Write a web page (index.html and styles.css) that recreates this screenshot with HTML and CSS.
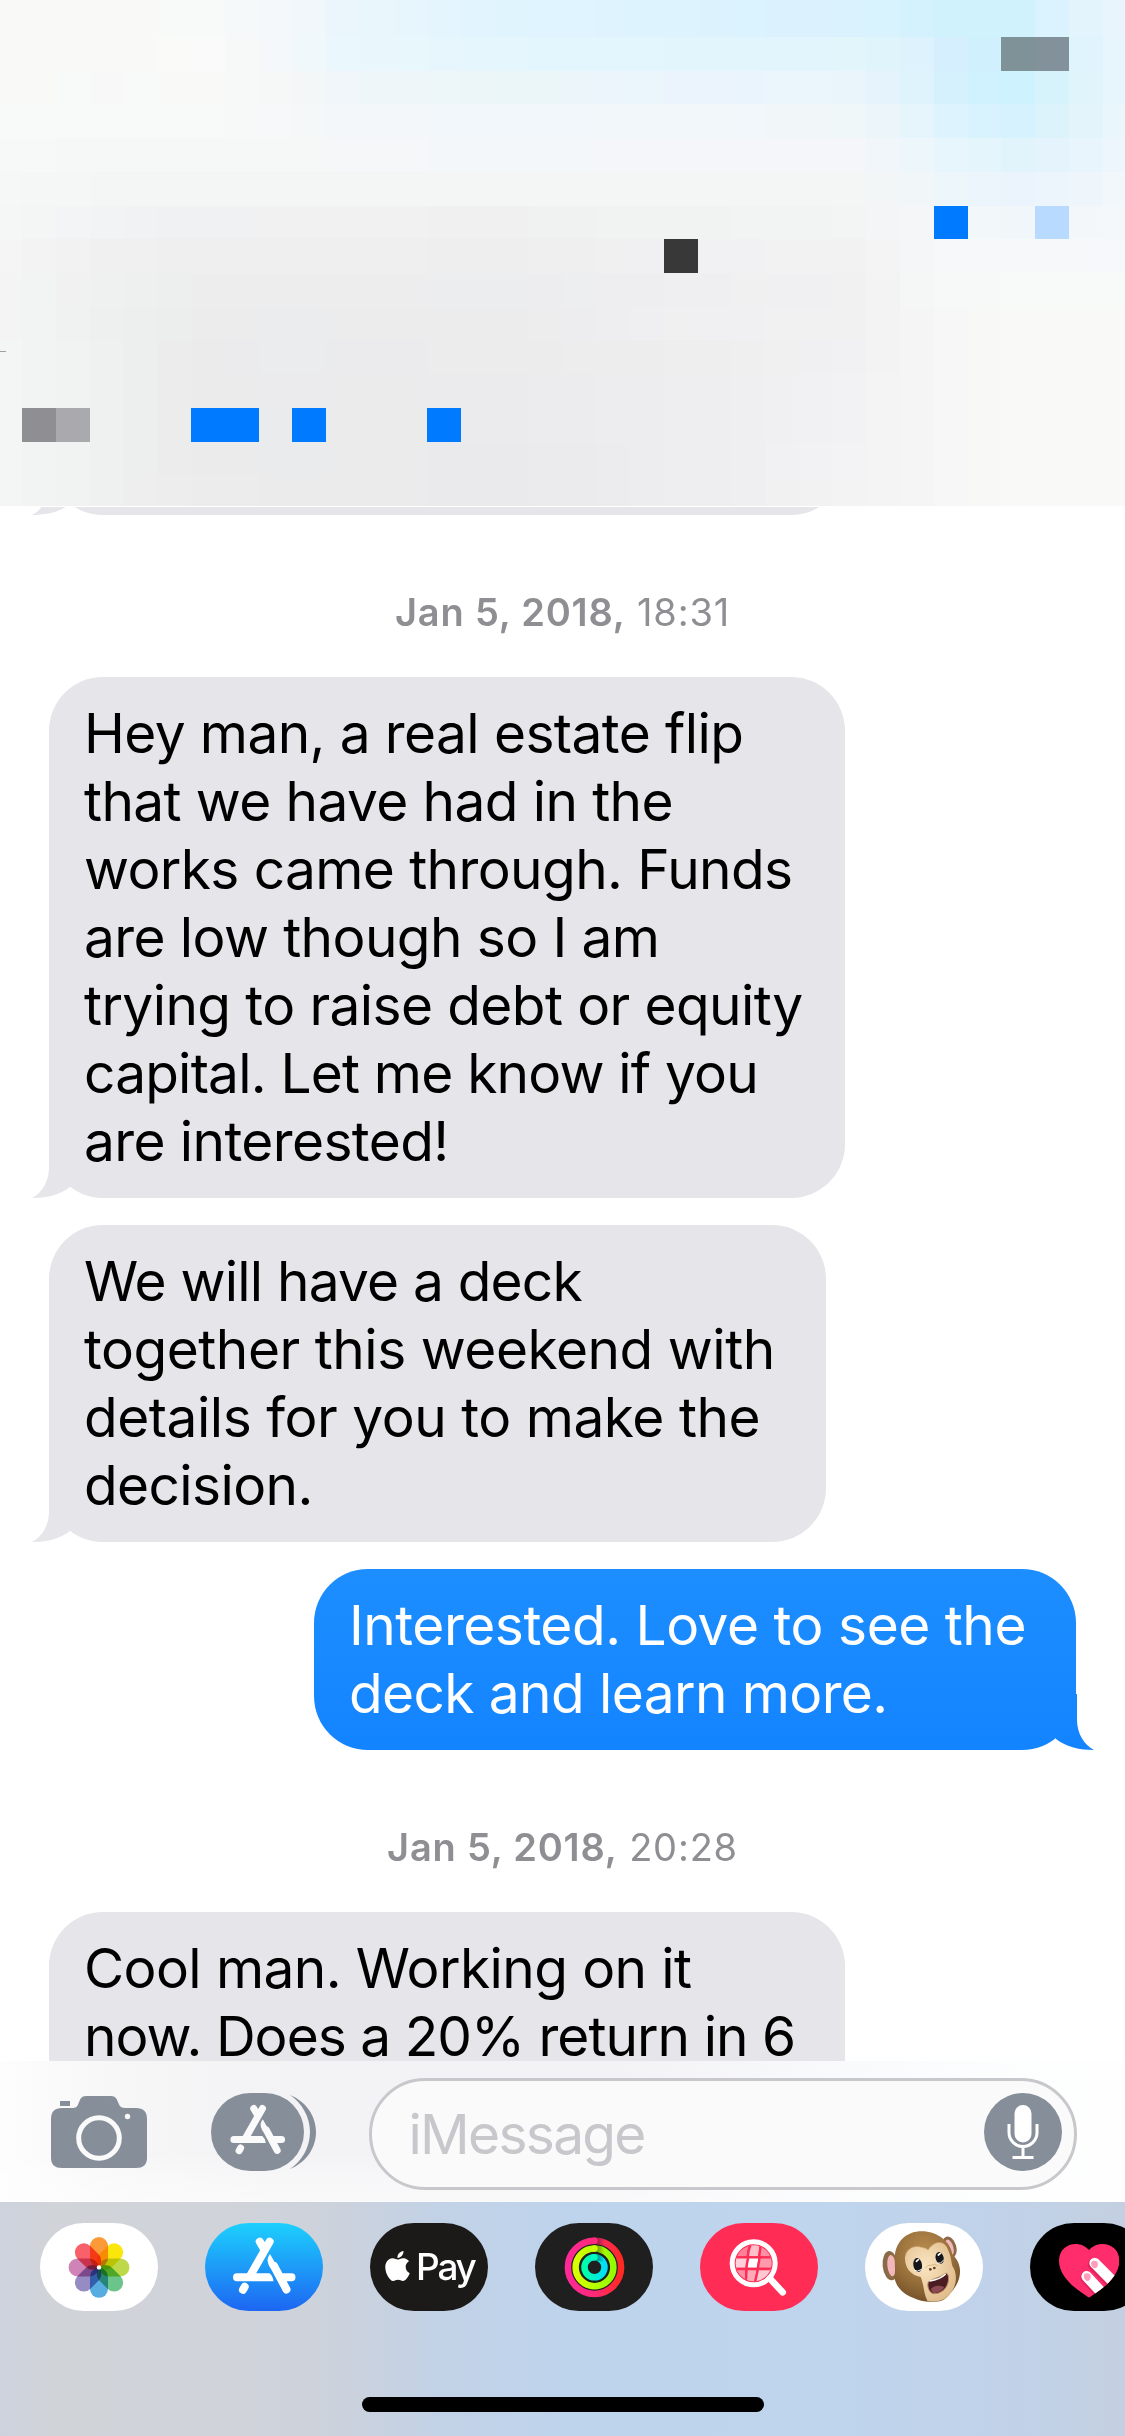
FILE: index.html
```html
<!DOCTYPE html>
<html lang="en">
<head>
<meta charset="utf-8">
<title>Messages</title>
<link rel="stylesheet" href="styles.css">
</head>
<body>
<svg class="defs" width="0" height="0" aria-hidden="true">
  <defs>
    <linearGradient id="blue" gradientUnits="userSpaceOnUse" x1="0" y1="-125" x2="0" y2="56"><stop stop-color="#1d8eff"/><stop offset="1" stop-color="#1384ff"/></linearGradient>
    <symbol id="tail" viewBox="0 0 40 56"><path d="M17 0V26C17 39 10 51 0 56C14 56 28 53 38 45V0Z"/></symbol>
    <symbol id="store" viewBox="0 0 118 88">
      <g fill="none" stroke="currentColor" stroke-width="8" stroke-linecap="round" stroke-linejoin="round">
        <path d="M64.7 18.6L45.6 52M54.7 18.6L59 26"/>
        <path d="M39.7 63.8L38 66.8"/>
        <path d="M69 43L81.5 66.5"/>
      </g>
      <path fill="currentColor" d="M32 50.2H64.5Q68 53 68.5 58.2H32A4 4 0 0 1 32 50.2ZM76 50.2H86.5A4 4 0 0 1 86.5 58.2H80ZM65 31C61.500 36 62 39 65 44.500L73 45Z"/>
    </symbol>
  </defs>
</svg>

<header class="mosaic" id="mosaic"></header>

<main class="thread">
  <div class="bubble received clipped"><svg class="tail"><use href="#tail"/></svg></div>
  <div class="stamp"><b>Jan 5, 2018,</b> 18:31</div>
  <div class="bubble received long">Hey man, a real estate flip<br>that we have had in the<br>works came through. Funds<br>are low though so I am<br>trying to raise debt or equity<br><span class="snug">capital. Let me know if you</span><br>are interested!<svg class="tail"><use href="#tail"/></svg></div>
  <div class="bubble received short"><span class="snug">We will have a deck</span><br><span class="loose">together this weekend with</span><br><span class="loose">details for you to make the</span><br>decision.<svg class="tail"><use href="#tail"/></svg></div>
  <div class="bubble sent"><span class="loose">Interested. Love to see the</span><br>deck and learn more.<svg class="tail"><use href="#tail"/></svg></div>
  <div class="stamp"><b>Jan 5, 2018,</b> 20:28</div>
  <div class="bubble received long last">Cool man. Working on it<br><span class="tight">now. Does a 20% return in 6</span></div>
</main>

<section class="composer">
  <svg class="camera" viewBox="0 0 96 74">
    <path fill="#868e99" d="M9 6h10v5H9zM11 13H22C30 13 26 1 35 1H60C69 1 65 13 74 13H85Q96 13 96 24V63Q96 73 85 73H11Q0 73 0 63V24Q0 13 11 13Z"/>
    <circle cx="48" cy="43" r="20.300" fill="none" stroke="#fafafa" stroke-width="5"/>
    <circle cx="76.500" cy="21.500" r="2.700" fill="#fafafa"/>
  </svg>
  <svg class="drawer" viewBox="0 0 106 78">
    <rect width="93" height="78" rx="39" fill="#868e99"/>
    <path fill="#868e99" d="M79 2C94 8 105 22 105 39S94 70 79 76C91 68 99 54 99 39S91 10 79 2Z"/>
    <use href="#store" x="-5.500" y="-0.800" width="104" height="77" color="#fafafa"/>
  </svg>
  <div class="field">
    <span>iMessage</span>
    <svg class="mic" viewBox="0 0 78 78">
      <circle cx="39" cy="39" r="39" fill="#868e99"/>
      <rect x="30.500" y="12" width="17" height="37.500" rx="8.500" fill="#fff"/>
      <path d="M25 31V39.500A14 14 0 0 0 53 39.500V31M39 54V64.500M28.500 64.500H49.500" fill="none" stroke="#fff" stroke-width="3"/>
    </svg>
  </div>
</section>

<footer class="dock">
  <div class="apps">
    <svg class="app" viewBox="0 0 118 88">
      <rect width="118" height="88" rx="44" fill="#fff"/>
      <g class="petals">
        <rect x="50" y="14" width="18" height="30" rx="9" fill="#fb9a36"/>
        <rect x="50" y="14" width="18" height="30" rx="9" fill="#fbe60c" transform="rotate(45 59 44.400)"/>
        <rect x="50" y="14" width="18" height="30" rx="9" fill="#bdd94a" transform="rotate(90 59 44.400)"/>
        <rect x="50" y="14" width="18" height="30" rx="9" fill="#6bc489" transform="rotate(135 59 44.400)"/>
        <rect x="50" y="14" width="18" height="30" rx="9" fill="#57ade0" transform="rotate(180 59 44.400)"/>
        <rect x="50" y="14" width="18" height="30" rx="9" fill="#978bc4" transform="rotate(225 59 44.400)"/>
        <rect x="50" y="14" width="18" height="30" rx="9" fill="#cf83b6" transform="rotate(270 59 44.400)"/>
        <rect x="50" y="14" width="18" height="30" rx="9" fill="#f8606a" transform="rotate(315 59 44.400)"/>
      </g>
      <circle cx="59" cy="44.400" r="2.200" fill="#fff"/>
    </svg>
    <svg class="app" viewBox="0 0 118 88">
      <linearGradient id="sky" x2="0" y2="1"><stop stop-color="#1dd0fd"/><stop offset="1" stop-color="#1d66f2"/></linearGradient>
      <rect width="118" height="88" rx="44" fill="url(#sky)"/>
      <use href="#store" width="118" height="88" color="#fff"/>
    </svg>
    <div class="app pay">
      <svg viewBox="2 0 20 24"><path fill="#fff" d="M12.152 6.896c-.948 0-2.415-1.078-3.96-1.040-2.040.027-3.910 1.183-4.961 3.014-2.117 3.675-.546 9.103 1.519 12.090 1.013 1.454 2.208 3.090 3.792 3.039 1.520-.065 2.090-.987 3.935-.987 1.831 0 2.350.987 3.960.948 1.637-.026 2.676-1.480 3.676-2.948 1.156-1.688 1.636-3.325 1.662-3.415-.039-.013-3.182-1.221-3.220-4.857-.026-3.040 2.480-4.494 2.597-4.559-1.429-2.090-3.623-2.324-4.390-2.376-2-.156-3.675 1.090-4.610 1.090zM15.530 3.830c.843-1.012 1.400-2.427 1.245-3.830-1.207.052-2.662.805-3.532 1.818-.780.896-1.454 2.338-1.273 3.714 1.338.104 2.715-.688 3.559-1.701"/></svg>
      <span>Pay</span>
    </div>
    <svg class="app" viewBox="0 0 118 88">
      <linearGradient id="move"><stop stop-color="#ff2898"/><stop offset=".5" stop-color="#ff2a78"/><stop offset="1" stop-color="#ff2a22"/></linearGradient>
      <linearGradient id="exercise"><stop stop-color="#d8ff00"/><stop offset="1" stop-color="#94fc00"/></linearGradient>
      <linearGradient id="stand"><stop stop-color="#00ffaa"/><stop offset="1" stop-color="#00e0f4"/></linearGradient>
      <linearGradient id="shade"><stop stop-opacity=".45"/><stop offset="1" stop-opacity="0"/></linearGradient>
      <rect width="118" height="88" rx="44" fill="#1f1f1f"/>
      <g fill="none" stroke-width="6.500">
        <circle cx="59.500" cy="44.300" r="26.600" stroke="url(#move)"/>
        <circle cx="59.500" cy="44.300" r="18.900" stroke="url(#exercise)"/>
        <circle cx="59.500" cy="44.300" r="10" stroke="url(#stand)"/>
      </g>
      <path fill="url(#shade)" d="M60 14.500Q67 14.500 70 17V24Q66 21 60 21ZM60 22.200Q65 22.500 69 25V31Q65 29 60 28.700ZM60 31Q65 31 68 34V39Q64 37.500 60 37.500Z"/>
      <circle cx="59.500" cy="17.700" r="3.250" fill="#ff2a80"/><circle cx="59.500" cy="25.400" r="3.250" fill="#c9ff00"/><circle cx="59.500" cy="34.300" r="3.250" fill="#00fbc0"/>
    </svg>
    <svg class="app" viewBox="510 22 354 264">
      <clipPath id="lens"><circle cx="671" cy="143" r="54"/></clipPath>
      <rect x="510" y="22" width="354" height="264" rx="132" fill="#ff2d55"/>
      <g clip-path="url(#lens)" stroke="#ff2d55" stroke-width="7">
        <path fill="#ff8199" d="M610 80H665Q655 95 653 125H610Z"/><path fill="#ffc0cc" d="M665 80H693Q691 105 687 125H653Q655 100 665 80Z"/><path fill="#ff8fa5" d="M693 80H735V125H687Q691 105 693 80Z"/>
        <path fill="#ffd0d9" d="M610 125H656Q650 140 650 160H610Z"/><path fill="#fff" d="M655 125H689Q687 145 683 160H649Q651 140 655 125Z"/><path fill="#ff99ac" d="M689 125H735V160H683Z"/>
        <path fill="#ff8fa5" d="M610 160H650Q648 180 649 205H610Z"/><path fill="#ffa9b9" d="M650 160H684Q680 185 674 205H647Z"/><path fill="#ffc9d3" d="M684 160H735V205H674Z"/>
      </g>
      <circle cx="671" cy="143" r="64.500" fill="none" stroke="#fff" stroke-width="15"/>
      <path d="M719 188L758 230" stroke="#fff" stroke-width="20" stroke-linecap="round"/>
    </svg>
    <svg class="app" viewBox="14 22 354 264">
      <radialGradient id="fur" cx=".45" cy=".3" r=".7"><stop stop-color="#b98d50"/><stop offset=".6" stop-color="#98703b"/><stop offset="1" stop-color="#76522a"/></radialGradient>
      <radialGradient id="skin" cx=".4" cy=".4" r=".7"><stop stop-color="#fae6c2"/><stop offset="1" stop-color="#dfb987"/></radialGradient>
      <rect x="14" y="22" width="354" height="264" rx="132" fill="#fff"/>
      <ellipse cx="267" cy="95" rx="21" ry="33" fill="#8b6a47" transform="rotate(-16 267 95)"/>
      <ellipse cx="267" cy="96" rx="12" ry="25" fill="#f3b6bb" transform="rotate(-16 267 96)"/>
      <ellipse cx="90" cy="150" rx="23" ry="44" fill="#8b6a47" transform="rotate(-6 90 150)"/>
      <ellipse cx="94" cy="150" rx="13" ry="32" fill="#f3b6bb" transform="rotate(-6 94 150)"/>
      <path fill="url(#fur)" d="M183 47C232 47 270 78 276 116C288 128 300 145 299 169C298 197 285 215 273 229C258 251 242 260 217 258C193 259 176 254 158 246C125 235 105 209 102 183C107 162 101 137 104 116C110 72 144 47 183 47Z"/>
      <path fill="url(#skin)" d="M203 103C220 77 246 73 259 94C271 116 272 132 276 151C292 172 290 210 271 231C255 255 230 261 201 255C189 232 192 210 181 184C151 178 135 157 134 129C133 103 160 86 184 95C194 97 199 99 203 103Z"/>
      <path fill="none" stroke="#c89d65" stroke-width="2" d="M136 122C137 101 160 86 184 95C194 97 199 99 203 103C220 77 246 73 259 94"/>
      <ellipse cx="172" cy="148" rx="13" ry="21" fill="#14161b" transform="rotate(-8 172 148)"/>
      <ellipse cx="238" cy="127" rx="12" ry="18" fill="#14161b" transform="rotate(-14 238 127)"/>
      <path d="M168 137L174 132M234 118L240 113" stroke="#fff" stroke-width="5" stroke-linecap="round"/>
      <path d="M161 163Q170 171 184 161M231 143Q242 145 250 133" stroke="#fff" stroke-width="3" fill="none"/>
      <path d="M195 158Q201 145 212 149Q225 141 232 151" stroke="#caa06d" stroke-width="2" fill="none"/>
      <circle cx="210" cy="161" r="4" fill="#633b26"/><circle cx="222" cy="157" r="4" fill="#633b26"/>
      <path fill="#4b1d23" stroke="#bb8760" stroke-width="3" d="M205 198C220 188 243 184 254 174C264 168 267 188 263 201C258 221 240 235 220 234C204 232 199 205 205 198Z"/>
      <path fill="#8b4a52" d="M211 220Q228 204 252 215Q240 233 220 232Q214 229 211 220Z"/>
      <path d="M208 196Q238 192 256 175" fill="none" stroke="#fff" stroke-width="5"/>
    </svg>
    <svg class="app" viewBox="510 22 354 264">
      <clipPath id="heart"><path d="M687 246C656 225 597 188 597 135C597 82 660 70 687 103C714 70 778 82 778 135C778 188 718 225 687 246Z"/></clipPath>
      <rect x="510" y="22" width="354" height="264" rx="132"/>
      <g clip-path="url(#heart)">
        <path fill="#ff2d6c" d="M590 70H790V250H590Z"/>
        <g stroke-linecap="round">
          <path d="M680 186L742 253M702 146L770 214" stroke="#c51b50" stroke-width="38" opacity=".5"/>
          <path d="M680 182L742 249M704 142L770 209" stroke="#fff" stroke-width="32"/>
        </g>
        <path fill="#ff9dbb" d="M671 180Q672 172 682 173Q692 173 692 184Q691 196 682 196Q671 191 671 180ZM693 144Q694 134 704 135Q714 136 714 146Q713 158 704 158Q694 154 693 144Z"/>
      </g>
    </svg>
  </div>
  <div class="home"></div>
</footer>
<script src="mosaic.js"></script>
</body>
</html>
```
FILE: styles.css
```css
* { box-sizing: border-box; }
body {
  margin: 0;
  width: 1125px;
  height: 2436px;
  display: flex;
  flex-direction: column;
  overflow: hidden;
  background: #fff;
  color: #000;
  font-family: Inter, "Liberation Sans", sans-serif;
}
svg { display: block; }
.defs { position: absolute; }

.mosaic {
  flex: none;
  height: 506px;
  display: grid;
  grid-template-columns: 22.2px repeat(33, 33.77px);
  grid-template-rows: 37px repeat(13, 33.72px) 30.7px;
  overflow: hidden;
  position: relative;
}
.mosaic .tick {
  position: absolute;
  left: 0;
  top: 351px;
  width: 6px;
  height: 1px;
  background: #a0a0a2;
}

.thread {
  flex: none;
  height: 1554px;
  margin-top: 1px;
  display: flex;
  flex-direction: column;
  align-items: flex-start;
  overflow: hidden;
}
.bubble {
  flex: none;
  position: relative;
  padding: 22px 35px 23px;
  border-radius: 54px;
  font-size: 55px;
  line-height: 68px;
  letter-spacing: -0.6px;
  white-space: nowrap;
}
.snug { letter-spacing: -0.8px; }
.tight { letter-spacing: -0.97px; }
.loose { letter-spacing: -0.47px; }
.received { margin-left: 49px; background: #e5e5ea; }
.received .tail { left: -17px; fill: #e5e5ea; }
.long { width: 796px; }
.short { width: 777px; margin-top: 27px; }
.last { border-radius: 54px 54px 0 0; }
.sent {
  align-self: flex-end;
  width: 762px;
  margin: 27px 49px 0 0;
  background: linear-gradient(#1d8eff, #1384ff);
  color: #fff;
}
.sent .tail { right: -18px; fill: url(#blue); transform: scaleX(-1); }
.tail { position: absolute; bottom: 0; width: 40px; height: 56px; }
.clipped { width: 796px; height: 120px; margin-top: -112px; }
.stamp {
  flex: none;
  align-self: stretch;
  height: 162px;
  padding-top: 73px;
  font-size: 38px;
  line-height: 48px;
  letter-spacing: 0.8px;
  text-align: center;
  color: #8e8e93;
}
.stamp b { font-weight: 600; }

.composer {
  flex: none;
  height: 141px;
  display: flex;
  align-items: center;
  padding: 3px 48px 0 51px;
  background: linear-gradient(#ffffff00 65%, #ffffff55 82%, #ffffff88),
    linear-gradient(90deg, #fdfdfd, #f6f6f7 12%, #f3f3f5 25%, #f3f3f6 55%, #f9fafc 75%, #fdfefe 92%, #fefefe);
}
.camera { width: 96px; height: 74px; margin-top: -3px; }
.drawer { width: 106px; height: 78px; margin: -3px 0 0 64px; }
.field {
  width: 708px;
  height: 112px;
  margin: 2px 0 0 auto;
  display: flex;
  align-items: center;
  justify-content: space-between;
  padding: 0 12px 0 36.5px;
  border: 3px solid #c8c8cc;
  border-radius: 56px;
  background: #fafafa;
  color: #c7c7cc;
  font-size: 55px;
  letter-spacing: -1.7px;
}
.mic { width: 78px; height: 78px; margin-top: -4px; }

.dock {
  flex: none;
  height: 234px;
  display: flex;
  flex-direction: column;
  justify-content: space-between;
  align-items: center;
  padding: 21px 0 24px;
  background: linear-gradient(90deg, #cdd2dd, #d0d3d8 4%, #d0d3d9 20%, #ccd2dc 30%, #c2d2e6 39%, #bed3ec 50%, #bfd4ed 75%, #c0d2e9 88%, #c4d0e1);
}
.apps { align-self: stretch; display: flex; gap: 47px; padding-left: 40px; overflow: hidden; }
.app { flex: none; width: 118px; height: 88px; }
.petals rect { mix-blend-mode: multiply; }
.petals { isolation: isolate; }
.pay {
  display: flex;
  align-items: center;
  gap: 6px;
  padding: 0 0 0 15px;
  border-radius: 44px;
  background: #1c1a18;
  color: #fff;
  font-size: 37px;
  font-weight: 500;
  letter-spacing: -2.2px;
}
.pay svg { width: 25px; height: 30px; margin-top: -3px; }
.pay span { margin-top: -2px; }
.home { width: 402px; height: 15px; border-radius: 8px; background: #000; }
```
FILE: mosaic.js
```js
// Header backdrop: colours at control columns are interpolated across the cells of each row.
const stops = [0, 100, 190, 290, 340, 500, 700, 850, 900, 950, 1010, 1060, 1125];
const rows = [
  "f9faf8 f9faf8 f8faf9 f3f8fb ebf6fc e0f4fe dcf3fe daf2fe d6f2fe cff2fd cef2fd dff3fe ebf5fb",
  "f9faf8 f9faf8 fafaf9 f3f8fa eaf7fc e5f6fd e2f5fd e2f5fb dff3fb d4effe ccf1fc dcf3fe e9f5fc",
  "f9faf8 f8f8f9 f9faf8 f5f8f8 f0f6f9 ebf6f8 ebf4fd e9f5fb e2f4fc d3f1fe cdf2fe daf3fb eaf5fc",
  "f8f9f9 f8f9f9 f8f9f9 f6f8f9 f3f7fa f2f7fb f2f7fa f0f7f9 e8f5fa dcf4fe d4f2fe dff4fb ebf6fc",
  "f7f8f8 f6f8f8 f6f8f8 f6f8f8 f5f7f8 f4f7f9 f4f6f9 f4f6f9 eff6fb e6f5fc e1f4fc e6f4fc eff6fc",
  "f6f7f7 f4f5f5 f4f5f5 f4f5f5 f3f6f4 f3f6f4 f3f6f4 f4f6f5 f3f6f7 ecf6fb ebf4fd ecf5fb f2f7fa",
  "f5f6f6 f2f3f4 f0f1f3 f1f1f2 f1f1f2 f0f0f1 f1f3f2 f3f4f4 f5f6f7 f3f8fa f1f6fa f2f7f9 f4f8fa",
  "f5f5f5 f0f0f0 efefef efefef efefef eeeeef f1f1f3 f2f2f3 f5f6f6 f6f8f9 f6f8fa f6f8fa f6f8fb",
  "f4f4f4 eff0f0 ededee ededed ededed ecedef efeff1 f1f1f2 f4f5f5 f7f8f8 f8f9f9 f7faf8 f8faf9",
  "f4f4f4 eef0f0 ececec ebecee ececed ececed f0f0f2 f1f1f2 f4f4f5 f7f7f7 f9f9f8 f9f9f8 f9f9f8",
  "f4f5f5 eff0f0 ebebec ebecee ebebed ececec eeeeef f1f1f3 f4f4f5 f7f7f7 f9f9f8 f9f9f8 f9f9f8",
  "f4f5f5 eff0f0 ebebec ebebed ebebec ebebed eeeef0 f2f2f4 f5f5f5 f7f7f7 f9f9f8 f9f9f8 f9f9f8",
  "f4f6f5 eff0f0 ebebec eaebec ebebec ebebed eeeef0 f2f2f4 f5f5f5 f7f7f7 f9f9f8 f9f9f8 f9f9f8",
  "f4f6f5 eff0f0 ebebec eaebec ebebec eaeaec eeeef0 f3f3f5 f5f5f5 f7f7f7 f9f9f8 f9f9f8 f9f9f8",
  "f4f5f5 eff0f0 ececec ebebec ebebec eaeaec eeeef0 f3f3f4 f5f5f5 f7f7f7 f9f9f8 f9f9f8 f9f9f8",
].map(r => r.split(" ").map(h => [0, 2, 4].map(i => parseInt(h.slice(i, i + 2), 16))));

// Solid cells keyed by "row,column".
const solid = {
  "1,30": "#7f9298", "1,31": "#83929a",
  "6,28": "#007aff", "6,31": "#b9daff",
  "7,20": "#383838",
  "12,1": "#8e8e93", "12,2": "#aaaaae",
  "12,6": "#007aff", "12,7": "#007aff", "12,9": "#007aff", "12,13": "#007aff",
};

const mosaic = document.getElementById("mosaic");
rows.forEach((row, r) => {
  for (let c = 0; c < 34; c++) {
    const x = Math.min(c * 33.75, 1124);
    const k = stops.findIndex((s, i) => x >= s && x < stops[i + 1]);
    const t = (x - stops[k]) / (stops[k + 1] - stops[k]);
    const rgb = row[k].map((v, i) => Math.round(v + (row[k + 1][i] - v) * t));
    const cell = document.createElement("i");
    cell.style.background = solid[r + "," + c] || `rgb(${rgb})`;
    mosaic.append(cell);
  }
});
const tick = document.createElement("span");
tick.className = "tick";
mosaic.append(tick);
```
